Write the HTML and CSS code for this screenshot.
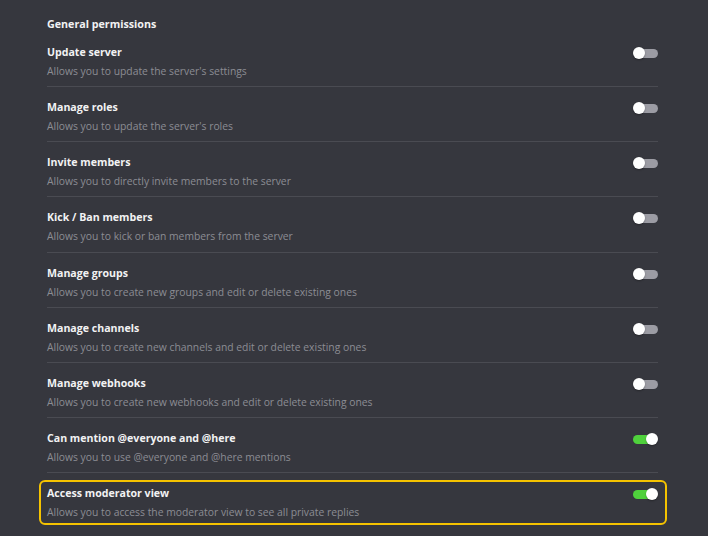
FILE: index.html
```html
<!DOCTYPE html>
<html lang="en">
<head>
  <meta charset="UTF-8" />
  <title>Permissions</title>
  <link rel="stylesheet" href="styles.css">
</head>
<body>
  <div class="permissions">
    <div class="section-title">General permissions</div>

    <div class="perm">
      <div class="perm-text">
        <div class="perm-name">Update server</div>
        <div class="perm-desc">Allows you to update the server's settings</div>
      </div>
      <span class="toggle"></span>
    </div>

    <div class="perm">
      <div class="perm-text">
        <div class="perm-name">Manage roles</div>
        <div class="perm-desc">Allows you to update the server's roles</div>
      </div>
      <span class="toggle"></span>
    </div>

    <div class="perm">
      <div class="perm-text">
        <div class="perm-name">Invite members</div>
        <div class="perm-desc">Allows you to directly invite members to the server</div>
      </div>
      <span class="toggle"></span>
    </div>

    <div class="perm">
      <div class="perm-text">
        <div class="perm-name">Kick / Ban members</div>
        <div class="perm-desc">Allows you to kick or ban members from the server</div>
      </div>
      <span class="toggle"></span>
    </div>

    <div class="perm">
      <div class="perm-text">
        <div class="perm-name">Manage groups</div>
        <div class="perm-desc">Allows you to create new groups and edit or delete existing ones</div>
      </div>
      <span class="toggle"></span>
    </div>

    <div class="perm">
      <div class="perm-text">
        <div class="perm-name">Manage channels</div>
        <div class="perm-desc">Allows you to create new channels and edit or delete existing ones</div>
      </div>
      <span class="toggle"></span>
    </div>

    <div class="perm">
      <div class="perm-text">
        <div class="perm-name">Manage webhooks</div>
        <div class="perm-desc">Allows you to create new webhooks and edit or delete existing ones</div>
      </div>
      <span class="toggle"></span>
    </div>

    <div class="perm">
      <div class="perm-text">
        <div class="perm-name">Can mention @everyone and @here</div>
        <div class="perm-desc">Allows you to use @everyone and @here mentions</div>
      </div>
      <span class="toggle on"></span>
    </div>

    <div class="perm highlighted">
      <div class="perm-text">
        <div class="perm-name">Access moderator view</div>
        <div class="perm-desc">Allows you to access the moderator view to see all private replies</div>
      </div>
      <span class="toggle on"></span>
    </div>
  </div>
</body>
</html>
```

FILE: styles.css
```css
body {
  margin: 0;
  background: #36373e;
  font-family: "Open Sans", sans-serif;
  overflow: hidden;
}

.permissions {
  width: 611px;
  margin-left: 47px;
}

.section-title {
  padding-top: 17px;
  margin-bottom: 1px;
  line-height: 14px;
  font-size: 10.7px;
  font-weight: bold;
  color: #f2f2f3;
}

.perm {
  position: relative;
  display: flex;
  justify-content: space-between;
  padding: 13px 0 8.15px;
  border-bottom: 1px solid #4a4b52;
}

.perm:last-child {
  border-bottom: none;
}

.perm-name {
  line-height: 14px;
  font-size: 10.6px;
  font-weight: bold;
  color: #f2f2f3;
}

.perm-desc {
  margin-top: 5px;
  line-height: 14px;
  font-size: 10.35px;
  color: #8c8d94;
}

.toggle {
  position: relative;
  width: 25px;
  height: 12px;
  margin-top: 2px;
}

.toggle::before {
  content: "";
  position: absolute;
  top: 2px;
  left: 3px;
  width: 22px;
  height: 9px;
  border-radius: 5px;
  background: #9c9ca4;
}

.toggle::after {
  content: "";
  position: absolute;
  top: 0;
  left: 0;
  width: 12px;
  height: 12px;
  border-radius: 50%;
  background: #fff;
  box-shadow: 0 1px 2px rgba(0,0,0,0.3);
}

.toggle.on::before {
  left: 0;
  background: #4fd13c;
}

.toggle.on::after {
  left: 13px;
}

.highlighted::after {
  content: "";
  position: absolute;
  top: 7px;
  left: -8px;
  right: -9px;
  bottom: 2px;
  border: 2px solid #f5c300;
  border-radius: 6px;
}
```
